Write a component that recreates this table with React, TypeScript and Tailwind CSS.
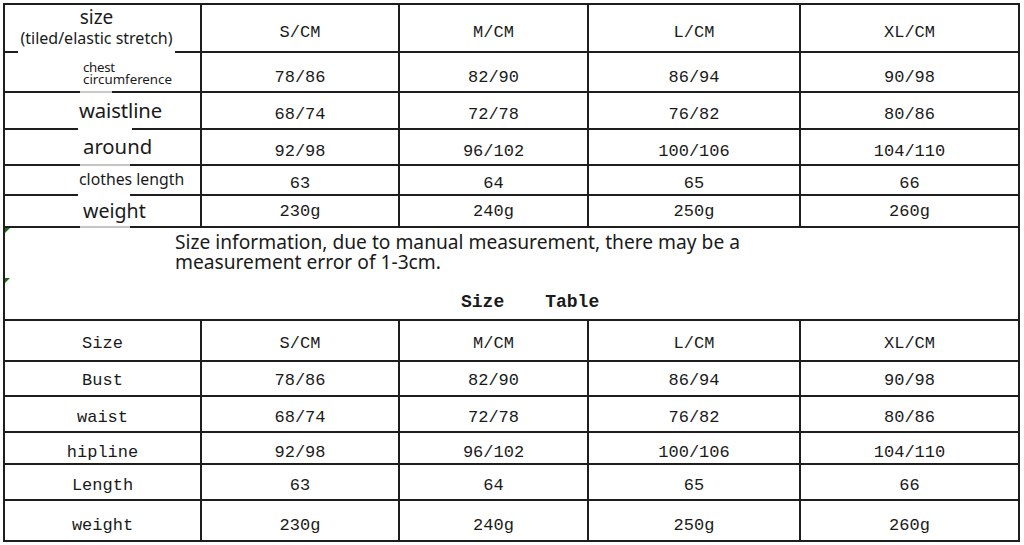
import React from "react";

const sizes = ["S/CM", "M/CM", "L/CM", "XL/CM"];

const topRows = [
  ["78/86", "82/90", "86/94", "90/98"],
  ["68/74", "72/78", "76/82", "80/86"],
  ["92/98", "96/102", "100/106", "104/110"],
  ["63", "64", "65", "66"],
  ["230g", "240g", "250g", "260g"],
];

// padding-top per row, the source image isn't centered evenly
const bottomRows = [
  { label: "Size", values: sizes, pad: "pt-[6px]" },
  { label: "Bust", values: topRows[0], pad: "pt-[4px]" },
  { label: "waist", values: topRows[1], pad: "pt-[7px]" },
  { label: "hipline", values: topRows[2], pad: "pt-[8px]" },
  { label: "Length", values: topRows[3], pad: "pt-[6px]" },
  { label: "weight", values: topRows[4], pad: "pt-[9px]" },
];

const topPads = ["pt-[10px]", "pt-[7px]", "pt-[8px]", "pt-[7px]", "pt-0"];

const mono = "font-['Liberation_Mono',monospace] text-[17px] leading-none text-[#1a1a1a]";
const sans = "font-['Noto_Sans',sans-serif] text-[#1a1a1a]";

function Cell({ children, className = "" }: { children: React.ReactNode; className?: string }) {
  return (
    <div className={`bg-white flex items-center justify-center ${mono} ${className}`}>
      {children}
    </div>
  );
}

function GreenTick({ className }: { className: string }) {
  return (
    <svg className={`absolute left-0 ${className}`} width="6" height="6" viewBox="0 0 6 6">
      <polygon points="0,0 5,0 0,5" fill="#1f6b1f" />
    </svg>
  );
}

export default function App() {
  return (
    <div className="min-h-screen bg-white pt-[3px] pl-[3px]">
      <div className="w-[1017px] bg-[#1e1e1e] p-[2px] flex flex-col gap-[2px]">
        {/* top table */}
        <div className="grid grid-cols-[195px_196px_187px_210px_217px] grid-rows-[46px_38px_35px_34px_28px_30px] gap-[2px]">
          {/* header */}
          <div className={`relative bg-white flex flex-col items-center justify-center pr-[12px] pb-[1px] ${sans}`}>
            <span className="text-[19px] leading-[21px]">size</span>
            <span className="text-[16px] leading-[21px]">(tiled/elastic stretch)</span>
            <span className="absolute top-full left-[13px] w-[157px] h-[2px] bg-white" />
          </div>
          {sizes.map((s) => (
            <Cell key={s} className="pt-[8px]">{s}</Cell>
          ))}

          {/* chest */}
          <div className={`relative bg-white flex flex-col justify-center pl-[78px] pt-[1px] ${sans}`}>
            <span className="text-[13.3px] leading-[12px] tracking-[-0.3px]">chest</span>
            <span className="text-[13.3px] leading-[12px]">circumference</span>
            <span className="absolute top-full left-[75px] w-[32px] h-[3px] bg-[#c8c8c8]" />
          </div>
          {topRows[0].map((v, i) => (
            <Cell key={i} className={topPads[0]}>{v}</Cell>
          ))}

          {/* waistline */}
          <div className={`relative bg-white flex items-center pl-[74px] pb-[1px] ${sans}`}>
            <span className="text-[20.3px] leading-none tracking-[-0.1px]">waistline</span>
            <span className="absolute top-full left-[73px] w-[54px] h-[2px] bg-white" />
          </div>
          {topRows[1].map((v, i) => (
            <Cell key={i} className={topPads[1]}>{v}</Cell>
          ))}

          {/* around */}
          <div className={`relative bg-white flex items-center pl-[78px] pb-[1px] ${sans}`}>
            <span className="text-[20.3px] leading-none">around</span>
            <span className="absolute top-full left-[75px] w-[50px] h-[2px] bg-[#c4c4c4]" />
          </div>
          {topRows[2].map((v, i) => (
            <Cell key={i} className={topPads[2]}>{v}</Cell>
          ))}

          {/* clothes length */}
          <div className={`relative bg-white flex items-center pl-[74px] ${sans}`}>
            <span className="text-[15.8px] leading-none">clothes length</span>
            <span className="absolute top-full left-[73px] w-[52px] h-[2px] bg-white" />
          </div>
          {topRows[3].map((v, i) => (
            <Cell key={i} className={topPads[3]}>{v}</Cell>
          ))}

          {/* weight */}
          <div className={`relative bg-white flex items-center pl-[78px] ${sans}`}>
            <span className="text-[19.6px] leading-none">weight</span>
            <span className="absolute top-full left-[75px] w-[50px] h-[2px] bg-[#c4c4c4]" />
          </div>
          {topRows[4].map((v, i) => (
            <Cell key={i} className={topPads[4]}>{v}</Cell>
          ))}
        </div>

        {/* note */}
        <div className="relative bg-white h-[91px] pt-[4px]">
          <GreenTick className="top-0" />
          <GreenTick className="top-[50px]" />
          <div className={`pl-[170px] text-[19.2px] leading-[20px] ${sans}`}>
            <div>Size information, due to manual measurement, there may be a</div>
            <div>measurement error of 1-3cm.</div>
          </div>
          <div className="mt-[20px] pl-[456px] flex gap-[41px] font-['Liberation_Mono',monospace] font-bold text-[18px] leading-[20px] text-[#1a1a1a]">
            <span>Size</span>
            <span>Table</span>
          </div>
        </div>

        {/* bottom table */}
        <div className="grid grid-cols-[195px_196px_187px_210px_217px] grid-rows-[39px_33px_34px_30px_34px_39px] gap-[2px]">
          {bottomRows.map((row) => (
            <React.Fragment key={row.label}>
              <Cell className={row.pad}>{row.label}</Cell>
              {row.values.map((v, i) => (
                <Cell key={i} className={row.pad}>{v}</Cell>
              ))}
            </React.Fragment>
          ))}
        </div>
      </div>
    </div>
  );
}
